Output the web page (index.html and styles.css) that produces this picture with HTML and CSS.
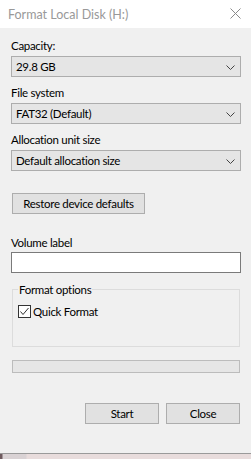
FILE: index.html
```html
<!DOCTYPE html>
<html lang="en">
<head>
  <meta charset="UTF-8">
  <meta name="viewport" content="width=device-width, initial-scale=1">
  <title>Format Local Disk (H:)</title>
  <link rel="stylesheet" href="styles.css">
</head>
<body>
  <div class="window">
    <div class="titlebar">
      <span class="title">Format Local Disk (H:)</span>
      <svg class="close-x" width="11" height="11" viewBox="0 0 11 11">
        <path d="M0.5 0.5 L10.5 10.5 M10.5 0.5 L0.5 10.5" stroke="#8a8a8a" stroke-width="1" fill="none"/>
      </svg>
    </div>

    <div class="content">
      <div class="label first">Capacity:</div>
      <div class="combo">
        <span>29.8 GB</span>
        <svg class="chev" width="9" height="5" viewBox="0 0 9 5"><path d="M0.5 0.5 L4.5 4.5 L8.5 0.5" stroke="#444" fill="none"/></svg>
      </div>

      <div class="label">File system</div>
      <div class="combo">
        <span>FAT32 (Default)</span>
        <svg class="chev" width="9" height="5" viewBox="0 0 9 5"><path d="M0.5 0.5 L4.5 4.5 L8.5 0.5" stroke="#444" fill="none"/></svg>
      </div>

      <div class="label">Allocation unit size</div>
      <div class="combo">
        <span>Default allocation size</span>
        <svg class="chev" width="9" height="5" viewBox="0 0 9 5"><path d="M0.5 0.5 L4.5 4.5 L8.5 0.5" stroke="#444" fill="none"/></svg>
      </div>

      <button class="btn restore">Restore device defaults</button>

      <div class="label vol">Volume label</div>
      <input class="textbox" type="text">

      <fieldset class="group">
        <legend>Format options</legend>
        <label class="check-row">
          <span class="checkbox">
            <svg width="11" height="11" viewBox="0 0 11 11"><path d="M1.5 5.5 L4 8.5 L9.5 2" stroke="#333" stroke-width="1" fill="none"/></svg>
          </span>
          Quick Format
        </label>
      </fieldset>

      <div class="progress"></div>

      <div class="actions">
        <button class="btn action">Start</button>
        <button class="btn action">Close</button>
      </div>
    </div>
  </div>
  <div class="desktop"></div>
</body>
</html>
```

FILE: styles.css
```css
* { box-sizing: border-box; }
body {
  margin: 0;
  padding: 0;
  font-family: Lato, "Noto Sans", sans-serif;
  font-size: 11.5px;
  letter-spacing: -0.3px;
  color: #000;
  background: #e6d9d9;
}
.window {
  height: 454px;
  background: #f0f0f0;
  border-bottom: 1px solid #9a9a9a;
  display: flex;
  flex-direction: column;
}
.titlebar {
  height: 28px;
  background: #fff;
  display: flex;
  align-items: center;
  justify-content: space-between;
  padding: 0 10px 0 8px;
}
.title {
  font-size: 12.5px;
  letter-spacing: 0;
  color: #999;
}
.close-x {
  margin-top: -1px;
}
.content {
  padding: 0 10px 0 11px;
}
.label {
  height: 15px;
  line-height: 15px;
  margin-top: 8px;
  margin-bottom: 3px;
}
.label.first { margin-top: 10px; }
.label.vol {
  margin-top: 21px;
  margin-bottom: 2px;
}
.combo {
  height: 21px;
  border: 1px solid #adadad;
  background: #e5e5e5;
  display: flex;
  align-items: center;
  justify-content: space-between;
  padding: 0 5px 0 4px;
}
.chev { margin-top: 1px; }
.btn {
  font-family: inherit;
  font-size: 11.5px;
  letter-spacing: -0.3px;
  height: 21px;
  padding: 0;
  border: 1px solid #adadad;
  background: #e1e1e1;
  color: #000;
}
.restore {
  display: block;
  width: 133px;
  margin: 22px 0 0 1px;
}
.textbox {
  display: block;
  width: 230px;
  height: 21px;
  margin: 0;
  border: 1px solid #7a7a7a;
  background: #fff;
}
.group {
  margin: 9px 1px 0 1px;
  padding: 7px 5px 27px 5px;
  border: 1px solid #dcdcdc;
}
.group legend {
  padding: 0 1px;
  margin-left: 0;
  line-height: 15px;
}
.check-row {
  display: flex;
  align-items: center;
  gap: 2px;
  height: 15px;
}
.checkbox {
  width: 13px;
  height: 13px;
  border: 1px solid #333;
  background: #fff;
  display: flex;
  align-items: center;
  justify-content: center;
}
.progress {
  height: 13px;
  margin: 13px 1px 0 1px;
  border: 1px solid #bcbcbc;
  background: #e6e6e6;
}
.actions {
  display: flex;
  justify-content: flex-end;
  gap: 7px;
  margin-top: 30px;
  padding-right: 1px;
}
.action { width: 74px; }
.desktop {
  height: 5px;
  background: linear-gradient(to right, #6e5a5e 0, #6e5a5e 2px, #d9d2d4 3px, #d9d2d4 26px, #e8dcdc 27px);
}
```
